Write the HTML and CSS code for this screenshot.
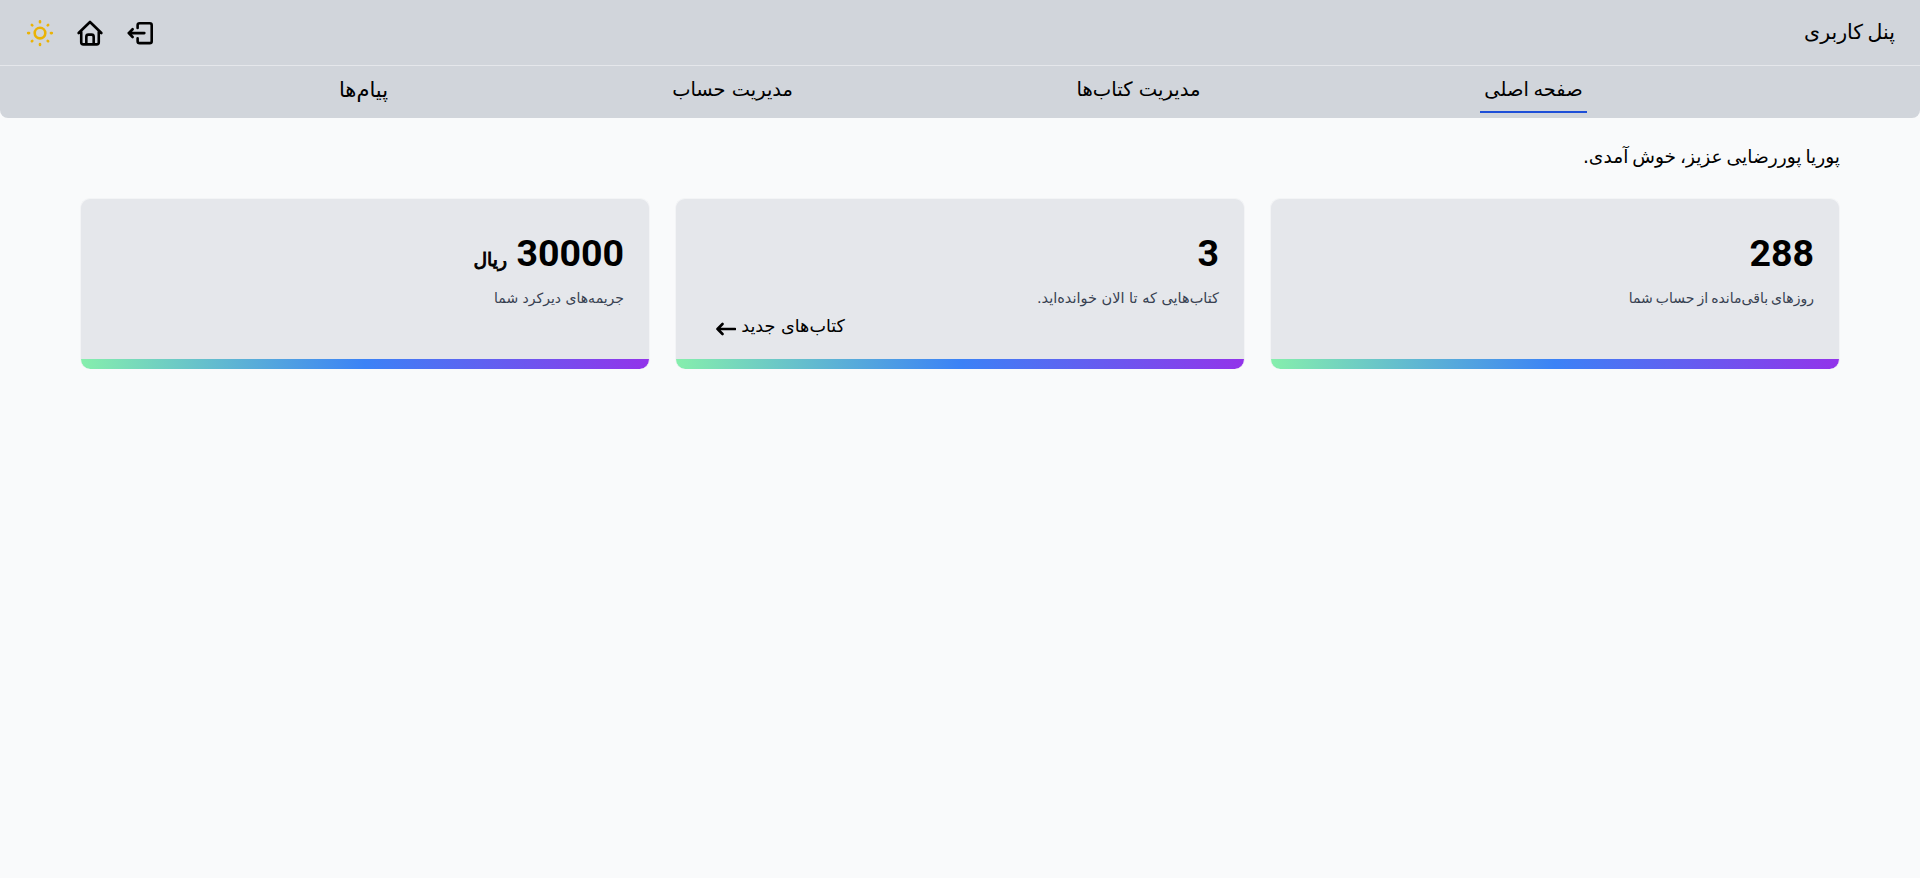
FILE: index.html
```html
<!DOCTYPE html>
<html lang="fa" dir="rtl">
<head>
<meta charset="utf-8">
<title>پنل کاربری</title>
<link rel="stylesheet" href="styles.css">
</head>
<body>
<header class="header">
  <div class="topbar">
    <h1 class="title">پنل کاربری</h1>
    <div class="actions">
      <svg class="icon" viewBox="0 0 24 24"><path d="M9.800 7.400V4.800Q9.800 3 11.600 3h9.400Q22.800 3 22.800 4.800v14.700Q22.800 21.300 21 21.300h-9.400Q9.800 21.300 9.800 19.500V16.900M16 12.100H1.600M5.200 8.500L1.600 12.100L5.200 15.700"/></svg>
      <svg class="icon" viewBox="0 0 24 24"><path d="M1.500 12L12 1.800L22.500 12M3.900 10.600V20.500q0 2 2 2h12.200q2 0 2-2V10.600M8.600 22.500V15.500q0-2 2-2h2.800q2 0 2 2v7"/></svg>
      <svg class="icon icon-sun" viewBox="0 0 24 24"><circle cx="12" cy="12.100" r="4.900"/><path d="M12 1.200v.8M12 22.200v.8M1.100 12.100h.8M22.100 12.100h.8M4.500 4.600l.4.400M19.100 19.200l.4.400M4.500 19.600l.4-.4M19.100 5l.4-.4"/></svg>
    </div>
  </div>
  <nav class="nav">
    <a class="nav-item active">صفحه اصلی</a>
    <a class="nav-item books">مدیریت کتاب‌ها</a>
    <a class="nav-item account">مدیریت حساب</a>
    <a class="nav-item messages">پیام‌ها</a>
  </nav>
</header>
<main class="content">
  <p class="greeting">پوریا پوررضایی عزیز، خوش آمدی.</p>
  <section class="cards">
    <article class="card">
      <div class="value">288</div>
      <p class="label label-days">روزهای باقی‌مانده از حساب شما</p>
    </article>
    <article class="card">
      <div class="value">3</div>
      <p class="label label-read">کتاب‌هایی که تا الان خوانده‌اید.</p>
      <a class="more"><span>کتاب‌های جدید</span><svg class="arrow" viewBox="0 0 20 14"><path d="M19 7H1.500M6.500 2L1.500 7l5 5"/></svg></a>
    </article>
    <article class="card">
      <div class="value">30000 <span class="unit">ریال</span></div>
      <p class="label">جریمه‌های دیرکرد شما</p>
    </article>
  </section>
</main>
</body>
</html>
```
FILE: styles.css
```css
* { box-sizing: border-box; margin: 0; padding: 0; }
body { background: #f9fafb; color: #000; font-family: "DejaVu Sans", sans-serif; min-height: 100vh; }
.header { height: 118px; background: #d1d5db; border-radius: 0 0 8px 8px; }
.topbar { height: 66px; padding: 0 25px; display: flex; align-items: center; justify-content: space-between; border-bottom: 1px solid #e5e7eb; }
.title { padding-bottom: 2px; font-size: 20.5px; font-weight: 400; word-spacing: -2px; white-space: nowrap; }
.actions { display: flex; gap: 20px; }
.icon { width: 30px; height: 30px; padding: 2px; fill: none; stroke: #000; stroke-width: 2.4; stroke-linecap: round; stroke-linejoin: round; overflow: visible; }
.icon-sun { stroke: #eab308; }
.nav { height: 52px; padding: 0 333px; display: flex; justify-content: space-between; }
.nav-item { height: 47px; font-size: 19.4px; line-height: 47px; text-align: center; white-space: nowrap; }
.active { width: 107px; border-bottom: 2px solid #1d4ed8; word-spacing: -1.5px; }
.books { width: 135px; font-size: 19.6px; }
.account { width: 129px; }
.messages { width: 61px; font-size: 21px; line-height: 49px; }
.content { padding: 0 80px; }
.greeting { height: 80px; padding-top: 24px; line-height: 30px; font-size: 18.6px; word-spacing: -2px; }
.cards { display: grid; grid-template-columns: repeat(3, 1fr); gap: 25px; }
.card { height: 171px; border: 1px solid #f3f4f6; border-bottom: 0; border-radius: 10px; padding: 28px 25px 0; overflow: hidden; background: linear-gradient(to left, #9333ea, #3b82f6, #86efac) bottom / 100% 10px no-repeat border-box, #e5e7eb; }
.value { height: 52px; font: 700 37.5px/52px Roboto, "DejaVu Sans", sans-serif; }
.unit { font-size: 18.8px; font-weight: 400; -webkit-text-stroke: 0.9px #000; }
.label { height: 34px; padding-top: 4px; font-size: 14px; line-height: 30px; color: #374151; }
.label-days { font-size: 14px; word-spacing: -1.4px; }
.label-read { font-size: 14.5px; }
.more { display: flex; align-items: center; gap: 5px; margin-right: 374px; height: 26px; font-size: 17.6px; white-space: nowrap; }
.arrow { width: 20px; height: 20px; padding-top: 6px; fill: none; stroke: #000; stroke-width: 2.6; stroke-linecap: round; stroke-linejoin: round; }
```
